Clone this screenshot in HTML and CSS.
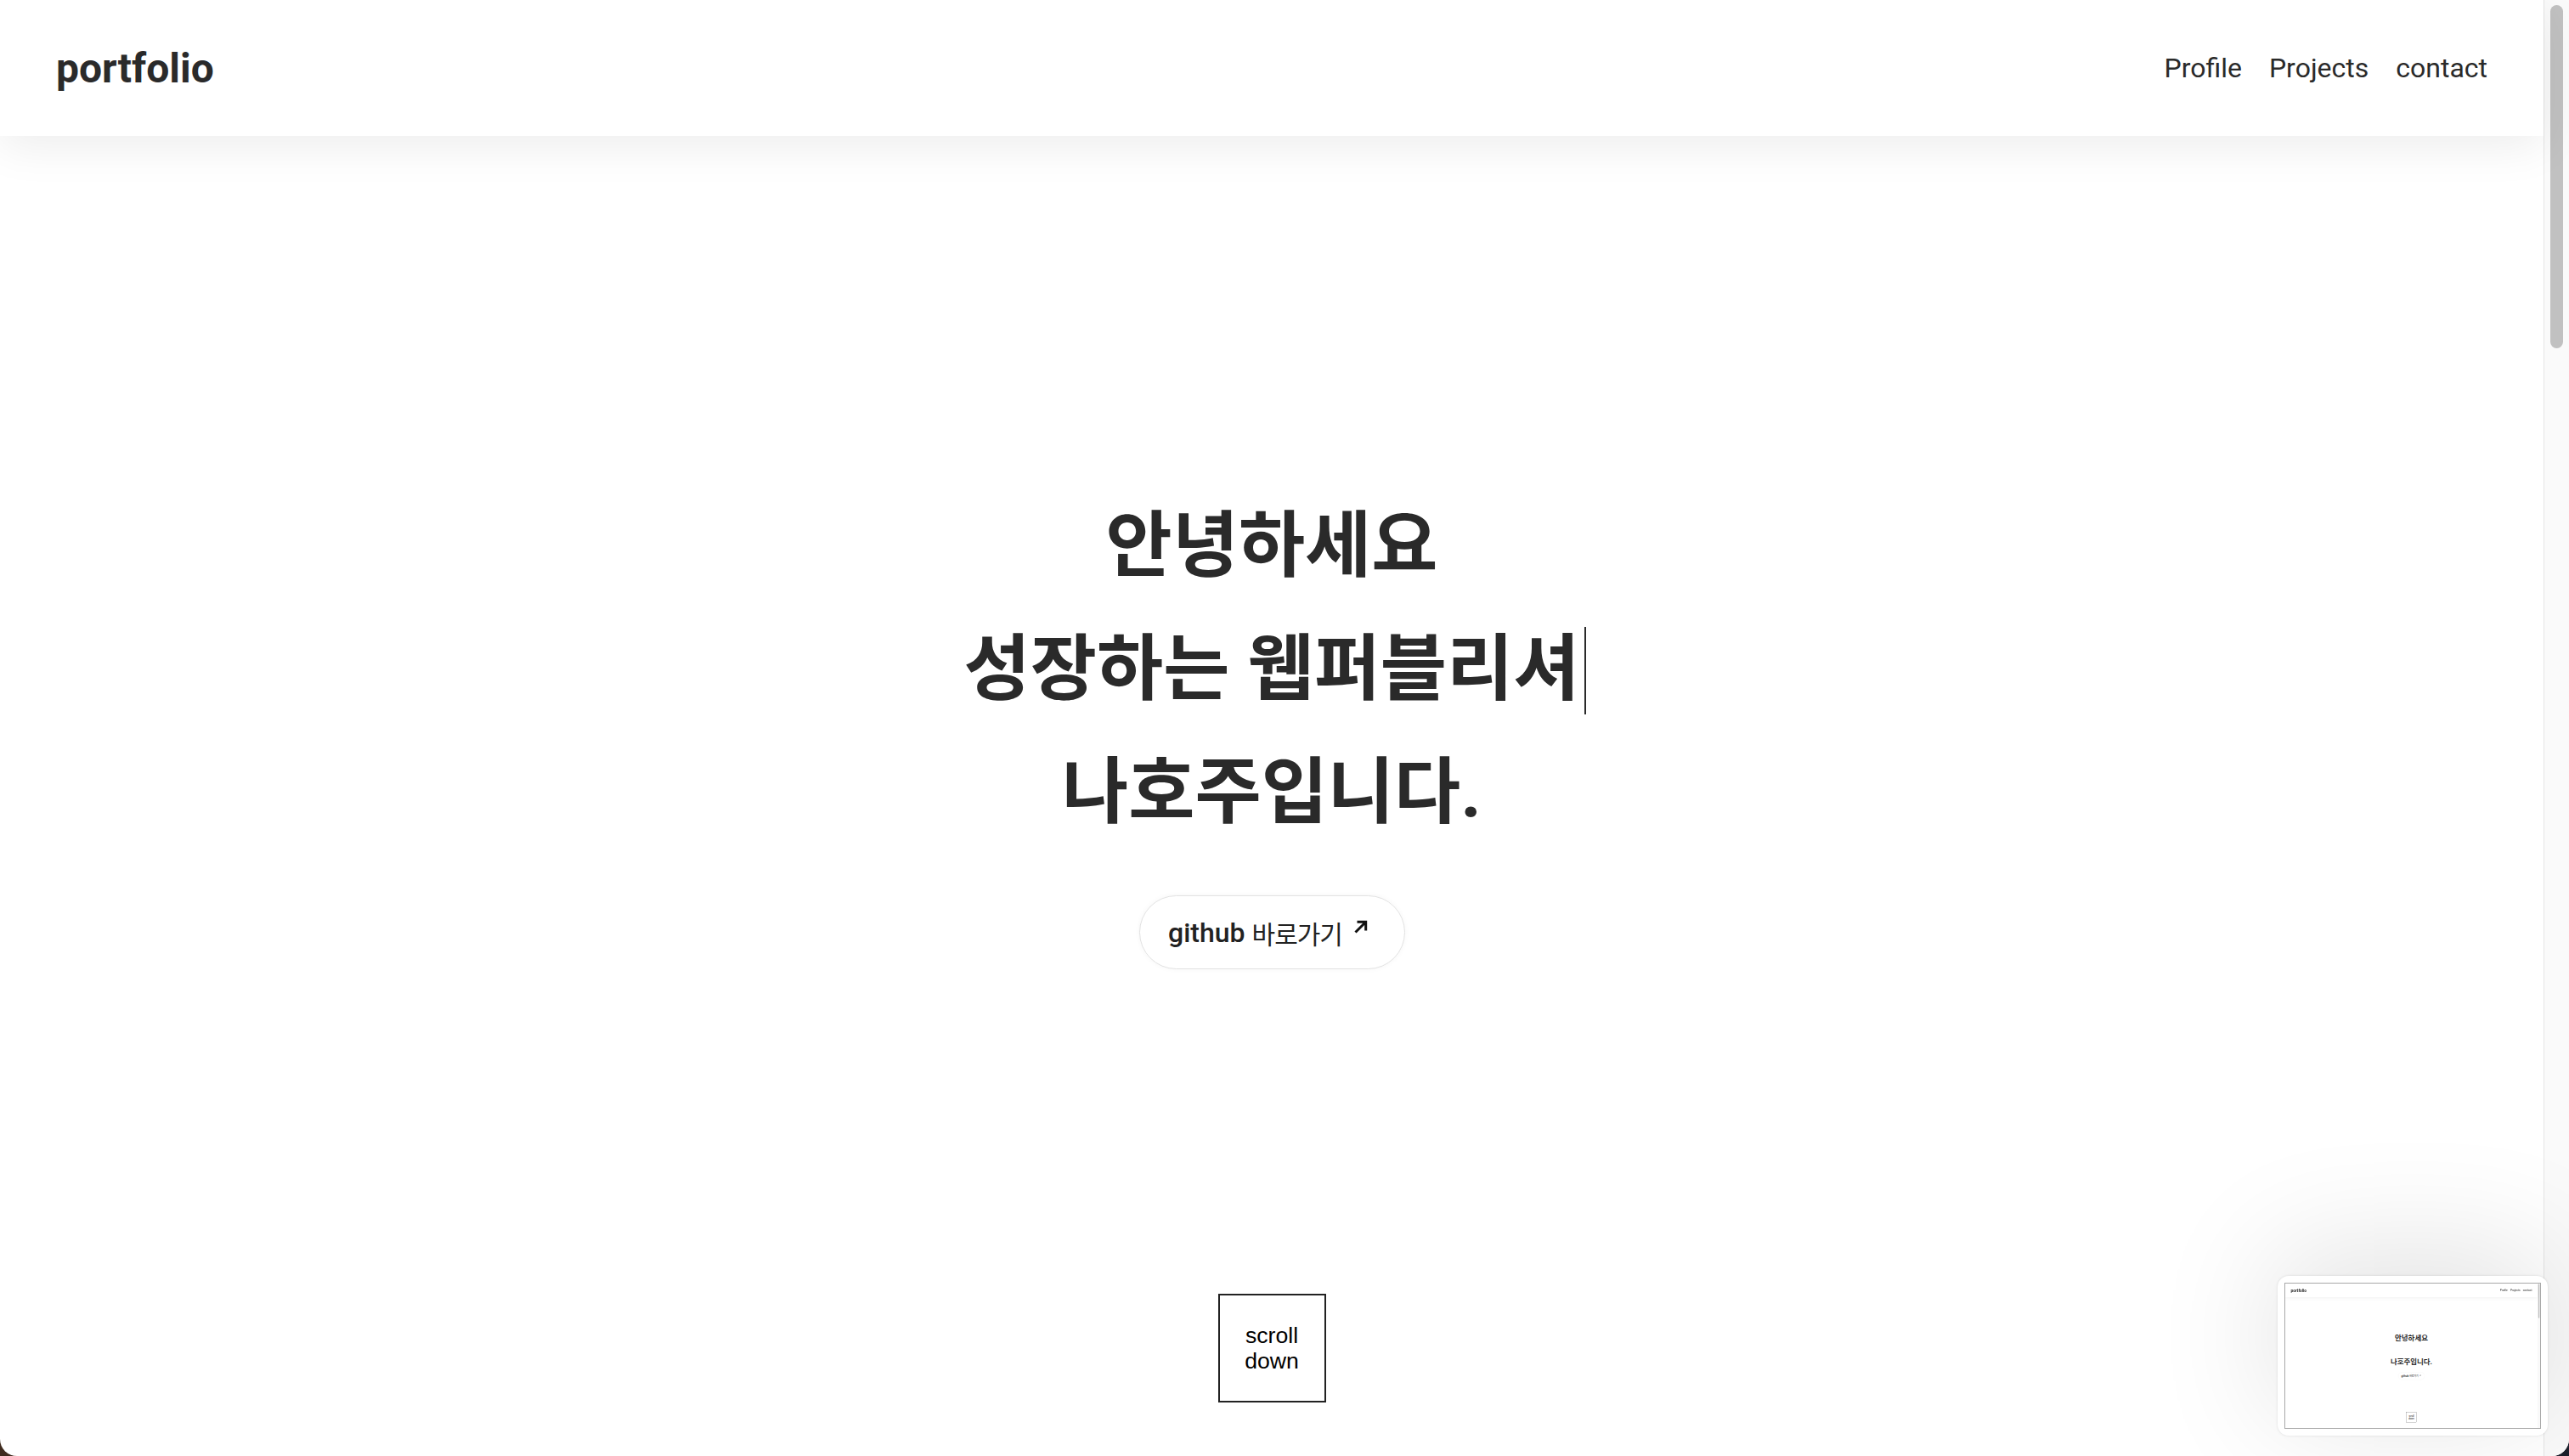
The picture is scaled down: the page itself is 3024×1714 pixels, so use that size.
FILE: index.html
```html
<!DOCTYPE html>
<html lang="ko">
<head>
<meta charset="utf-8">
<title>portfolio</title>
<link rel="stylesheet" href="styles.css">
</head>
<body>
<div class="window frame">
  <div class="page">
    <header class="header">
      <a class="logo">portfolio</a>
      <nav class="nav"><a>Profile</a><a>Projects</a><a>contact</a></nav>
    </header>
    <main class="hero">
      <h1 class="title">
        <span class="line">안녕하세요</span>
        <span class="line">성장하는 웹퍼블리셔<span class="cursor"></span></span>
        <span class="line">나호주입니다.</span>
      </h1>
      <a class="github">github <span class="ko">바로가기</span><svg class="arrow" viewBox="0 0 18 18" width="18" height="18"><path d="M2.5 15.5 L14.5 3.5 M4.5 3.3 H14.7 V13.5" fill="none" stroke="#111" stroke-width="3"/></svg></a>
      <button class="scroll">scroll<br>down</button>
    </main>
  </div>
  <div class="scrollbar"><div class="scroll-thumb"></div></div>

  <div class="shot">
    <div class="shot-img">
      <div class="mini frame">
        <div class="page">
          <header class="header">
            <a class="logo">portfolio</a>
            <nav class="nav"><a>Profile</a><a>Projects</a><a>contact</a></nav>
          </header>
          <main class="hero">
            <h1 class="title">
              <span class="line">안녕하세요</span>
              <span class="line"></span>
              <span class="line">나호주입니다.</span>
            </h1>
            <a class="github">github <span class="ko">바로가기</span><svg class="arrow" viewBox="0 0 18 18" width="18" height="18"><path d="M2.5 15.5 L14.5 3.5 M4.5 3.3 H14.7 V13.5" fill="none" stroke="#111" stroke-width="3"/></svg></a>
            <button class="scroll">scroll<br>down</button>
          </main>
        </div>
        <div class="scrollbar"><div class="scroll-thumb"></div></div>
      </div>
    </div>
  </div>
</div>
</body>
</html>
```

FILE: styles.css
```css
html, body {
  margin: 0;
  height: 100%;
}

body {
  background: linear-gradient(90deg, #3f2b1e, #1b202b);
  overflow: hidden;
  font-family: Roboto, "Noto Sans CJK KR", sans-serif;
  color: #2a2a2a;
}

.frame {
  display: flex;
  width: 3024px;
  height: 1714px;
  background: #fff;
}

.window {
  position: relative;
  overflow: hidden;
  border-radius: 0 0 20px 20px;
}

.page {
  flex: 1;
  min-width: 0;
  display: flex;
  flex-direction: column;
}

/* header */
.header {
  position: relative;
  z-index: 1;
  height: 160px;
  flex: none;
  display: flex;
  justify-content: space-between;
  align-items: center;
  padding: 0 66px 0 66px;
  background: #fff;
  box-shadow: 0 12px 50px rgba(0, 0, 0, 0.075);
}

.logo {
  font-size: 48px;
  font-weight: 700;
  color: #2a2a2a;
}

.nav {
  display: flex;
  gap: 32px;
}

.nav a {
  font-size: 32px;
  font-weight: 400;
  color: #2a2a2a;
}

/* hero */
.hero {
  flex: 1;
  display: flex;
  flex-direction: column;
  align-items: center;
}

.title {
  margin: 411px 0 0;
  font-size: 85px;
  font-weight: 700;
  line-height: 145px;
  text-align: center;
  color: #2a2a2a;
}

.line {
  display: block;
  min-height: 145px;
}

.cursor {
  display: inline-block;
  width: 2px;
  height: 103px;
  margin-left: 6px;
  margin-right: -8px;
  vertical-align: -24px;
  background: #2a2a2a;
}

.github {
  margin-top: 48px;
  width: 313px;
  height: 87px;
  box-sizing: border-box;
  padding-right: 8px;
  display: inline-flex;
  justify-content: center;
  align-items: center;
  border: 1px solid #e2e2e2;
  border-radius: 44px;
  box-shadow: 0 0 6px rgba(0, 0, 0, 0.04);
  font-size: 32px;
  font-weight: 500;
  color: #222;
  white-space: pre;
}

.ko {
  font-family: "Noto Sans CJK KR", sans-serif;
  font-weight: 400;
  font-size: 30px;
  letter-spacing: -1px;
}

.arrow {
  margin-left: 13px;
  margin-bottom: 14px;
  flex: none;
}

.scroll {
  margin-top: auto;
  margin-bottom: 63px;
  width: 127px;
  height: 128px;
  box-sizing: border-box;
  padding: 0;
  border: 2px solid #222;
  background: #fff;
  font-family: "Liberation Sans", Arial, sans-serif;
  font-size: 26.67px;
  line-height: 30px;
  color: #000;
}

/* scrollbar */
.scrollbar {
  flex: none;
  width: 30px;
  box-sizing: border-box;
  padding: 6px 0 0 7px;
  background: #fafafa;
  border-left: 1px solid #e6e6e6;
}

.scroll-thumb {
  width: 15px;
  height: 404px;
  border-radius: 8px;
  background: #c1c1c1;
}

/* screenshot thumbnail */
.shot {
  position: absolute;
  right: 25px;
  bottom: 24px;
  width: 318px;
  height: 188px;
  box-sizing: border-box;
  padding: 8px;
  background: #fff;
  border-radius: 13px;
  box-shadow: 0 -25px 150px rgba(0, 0, 0, 0.12), 0 0 3px rgba(0, 0, 0, 0.12);
}

.shot-img {
  width: 302px;
  height: 172px;
  box-sizing: border-box;
  border: 1px solid #a8a8a8;
  overflow: hidden;
}

.mini {
  transform: scale(0.0992);
  transform-origin: 0 0;
}
```
